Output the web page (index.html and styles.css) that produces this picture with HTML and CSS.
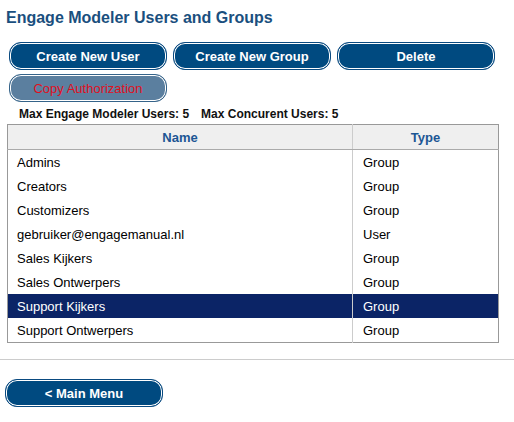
FILE: index.html
```html
<!DOCTYPE html>
<html>
<head>
<meta charset="utf-8">
<link rel="stylesheet" href="styles.css">
</head>
<body>
<h1 class="title">Engage Modeler Users and Groups</h1>
<div class="btn-row first">
  <button class="btn">Create New User</button>
  <button class="btn">Create New Group</button>
  <button class="btn">Delete</button>
</div>
<div class="btn-row second">
  <button class="btn btn-disabled">Copy Authorization</button>
</div>
<div class="limits">
  <span>Max Engage Modeler Users: 5</span>
  <span>Max Concurent Users: 5</span>
</div>
<table class="grid">
  <thead>
    <tr><th class="col-name">Name</th><th class="col-type">Type</th></tr>
  </thead>
  <tbody>
    <tr><td>Admins</td><td>Group</td></tr>
    <tr><td>Creators</td><td>Group</td></tr>
    <tr><td>Customizers</td><td>Group</td></tr>
    <tr><td>gebruiker@engagemanual.nl</td><td>User</td></tr>
    <tr><td>Sales Kijkers</td><td>Group</td></tr>
    <tr><td>Sales Ontwerpers</td><td>Group</td></tr>
    <tr class="selected"><td>Support Kijkers</td><td>Group</td></tr>
    <tr><td>Support Ontwerpers</td><td>Group</td></tr>
  </tbody>
</table>
<hr class="divider">
<div class="footer">
  <button class="btn">&lt; Main Menu</button>
</div>
</body>
</html>
```
FILE: styles.css
```css
html, body {
  margin: 0;
  padding: 0;
  background: #fff;
  font-family: "Liberation Sans", Arial, sans-serif;
}
.title {
  margin: 0;
  padding: 8px 0 0 6px;
  font-size: 16px;
  font-weight: bold;
  color: #1a4f7e;
  line-height: 19px;
}
.btn-row {
  display: flex;
  gap: 6px;
  padding-left: 9px;
}
.btn-row.first {
  margin-top: 15px;
}
.btn-row.second {
  margin-top: 4px;
}
.btn {
  width: 158px;
  height: 28px;
  border: 1px solid #0a4a80;
  border-radius: 12px;
  background: #004a80;
  box-shadow: inset 0 0 0 1px #fff;
  color: #fff;
  font-family: "Liberation Sans", Arial, sans-serif;
  font-size: 13px;
  font-weight: bold;
  padding: 0;
  cursor: pointer;
}
.btn-disabled {
  background: #5b7f9f;
  border-color: #356389;
  color: #e0101e;
  font-weight: normal;
}
.limits {
  display: flex;
  gap: 12px;
  padding: 5px 0 0 19px;
  font-size: 12px;
  font-weight: bold;
  color: #111;
  line-height: 14px;
}
.grid {
  margin: 3px 0 0 7px;
  width: 492px;
  border-collapse: collapse;
  border: 1px solid #999;
  font-size: 13px;
}
.grid th {
  background: #efefef;
  color: #1c5694;
  font-weight: bold;
  height: 24px;
  padding: 0;
  border-bottom: 1px solid #aaa;
  font-size: 13px;
}
.grid .col-name {
  width: 344px;
}
.grid th + th,
.grid td + td {
  border-left: 1px solid #ccc;
}
.grid td {
  height: 24px;
  padding: 0 0 0 9px;
  color: #000;
}
.grid td + td {
  padding-left: 10px;
}
.grid tr.selected td {
  background: #0b2466;
  color: #fff;
}
.divider {
  margin: 16px 0 0 0;
  border: 0;
  border-top: 1px solid #ccc;
  height: 0;
}
.footer {
  padding: 19px 0 0 5px;
}
```
